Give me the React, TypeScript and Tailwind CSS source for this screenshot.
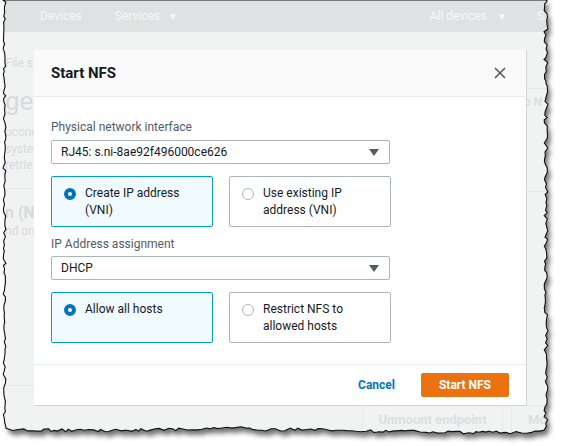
import React from "react";

function rng(seed: number) {
  let a = seed;
  return () => {
    a |= 0;
    a = (a + 0x6d2b79f5) | 0;
    let t = Math.imul(a ^ (a >>> 15), 1 | a);
    t = (t + Math.imul(t ^ (t >>> 7), 61 | t)) ^ t;
    return ((t ^ (t >>> 14)) >>> 0) / 4294967296;
  };
}

function tornPath() {
  const r = rng(7);
  const pts: [number, number][] = [];
  for (let y = 0; y < 428; y += 2 + r() * 3) pts.push([3 + r() * 3, y]);
  for (let x = 6; x < 544; x += 2 + r() * 4) {
    const base = 429 + Math.sin(x / 60) * 1.5 + (x > 250 ? 2 : 0);
    pts.push([x, base + r() * 3 - 1.5]);
  }
  for (let y = 430; y > 0; y -= 2 + r() * 3) pts.push([544 + r() * 4, y]);
  pts.push([546, 0]);
  return "M" + pts.map((p) => `${p[0].toFixed(1)},${p[1].toFixed(1)}`).join(" L") + " Z";
}

function TornEdge() {
  const d = tornPath();
  const outside = `M0,0 H561 V446 H0 Z ${d}`;
  return (
    <svg className="pointer-events-none absolute inset-0" width="561" height="446" viewBox="0 0 561 446">
      <defs>
        <clipPath id="out">
          <path d={outside} clipRule="evenodd" />
        </clipPath>
        <filter id="blur" x="-10%" y="-10%" width="120%" height="120%">
          <feGaussianBlur stdDeviation="2.5" />
        </filter>
      </defs>
      <path d={outside} fill="#fff" fillRule="evenodd" />
      <g clipPath="url(#out)">
        <path d={d} transform="translate(3,5)" fill="rgba(0,0,0,0.55)" filter="url(#blur)" />
      </g>
      <path d={d} fill="none" stroke="#111" strokeWidth="1.1" />
    </svg>
  );
}

function Caret() {
  return (
    <svg width="10" height="7" viewBox="0 0 10 7">
      <path d="M0 0 H10 L5 7 Z" fill="#545b64" />
    </svg>
  );
}

function Select({ value }: { value: string }) {
  return (
    <div className="flex h-[24px] w-[339px] items-center justify-between rounded-[2px] border border-[#aab7b8] bg-white pl-[9px] pr-[10px] text-[12px] text-[#16191f]">
      <span>{value}</span>
      <Caret />
    </div>
  );
}

function Tile({ selected, lines }: { selected?: boolean; lines: string[] }) {
  return (
    <div
      className={
        "flex h-[51px] w-[162px] items-start gap-[9px] rounded-[2px] border pl-[12px] pt-[8px] " +
        (selected ? "border-[#00a1c9] bg-[#f1faff]" : "border-[#aab7b8] bg-white")
      }
    >
      <span
        className={
          "mt-[3px] block h-[12px] w-[12px] shrink-0 rounded-full bg-white " +
          (selected ? "border-[4px] border-[#0073bb]" : "border border-[#aab7b8]")
        }
      />
      <div className="text-[12px] leading-[17px] text-[#16191f]">
        {lines.map((l) => (
          <div key={l}>{l}</div>
        ))}
      </div>
    </div>
  );
}

export default function App() {
  return (
    <div className="relative h-[446px] w-[561px] overflow-hidden bg-[#f1f2f2] font-['Roboto',sans-serif]">
      <header className="flex h-[32px] items-center bg-[#dfe2e2] pl-[40px] text-[12px] text-[#f6f7f7]">
        <span>Devices</span>
        <span className="ml-[33px] flex items-center gap-[8px]">
          Services <span className="text-[10px]">▼</span>
        </span>
        <span className="ml-auto flex items-center gap-[10px]">
          All devices <span className="text-[10px]">▼</span>
        </span>
        <span className="ml-[30px] mr-[17px]">S</span>
      </header>

      <main className="flex justify-between">
        <div className="flex w-[34px] flex-col overflow-hidden whitespace-nowrap pl-[5px] text-[#d8dbdb]">
          <div className="mt-[22px] text-[12px]">File st</div>
          <div className="mt-[14px] text-[26px] leading-[30px]">ge</div>
          <div className="mt-[8px] text-[12px] leading-[16.5px]">
            <div>ucone</div>
            <div>syste</div>
            <div>retrie</div>
          </div>
          <div className="mt-[14px] w-[40px] border-t border-[#e6e8e8]" />
          <div className="mt-[14px] text-[16px] font-bold leading-[20px]">n (N</div>
          <div className="text-[12px] leading-[16px]">nd on</div>
          <div className="mt-[146px] w-[40px] border-t border-[#e6e8e8]" />
        </div>
        <div className="mr-[10px] mt-[56px] flex h-[104px] w-[30px] flex-col overflow-hidden whitespace-nowrap border-y border-l border-[#e6e8e8] pl-[2px] pt-[4px] text-[12px] font-bold text-[#dcdfdf]">
          o N
        </div>
      </main>

      <div className="absolute left-[362px] top-[405px] flex h-[30px] w-[141px] items-center justify-center border border-[#e8eaea] text-[13px] font-bold text-[#dde0e0]">
        Unmount endpoint
      </div>
      <div className="absolute left-[511px] top-[405px] flex h-[30px] w-[50px] items-center border border-[#e8eaea] pl-[16px] text-[13px] font-bold text-[#dde0e0]">
        Mo
      </div>

      <section className="absolute left-[34px] top-[50px] flex w-[493px] flex-col border-b border-r border-[#cfd4d4] bg-white">
        <div className="flex h-[47px] items-center justify-between border-b border-[#eaeded] bg-[#fafafa] pl-[17px] pr-[20px]">
          <h2 className="text-[15px] font-bold text-[#16191f]">Start NFS</h2>
          <svg width="12" height="12" viewBox="0 0 12 12">
            <path d="M1 1 L11 11 M11 1 L1 11" stroke="#545b64" strokeWidth="1.6" />
          </svg>
        </div>
        <div className="flex flex-col pl-[17px] pt-[20px] pb-[21px]">
          <label className="text-[12px] leading-[20px] text-[#545b64]">Physical network interface</label>
          <div className="mt-[3px]">
            <Select value="RJ45: s.ni-8ae92f496000ce626" />
          </div>
          <div className="mt-[12px] flex gap-[16px]">
            <Tile selected lines={["Create IP address", "(VNI)"]} />
            <Tile lines={["Use existing IP", "address (VNI)"]} />
          </div>
          <label className="mt-[7px] text-[12px] leading-[20px] text-[#545b64]">IP Address assignment</label>
          <div className="mt-[2px]">
            <Select value="DHCP" />
          </div>
          <div className="mt-[12px] flex gap-[16px]">
            <Tile selected lines={["Allow all hosts"]} />
            <Tile lines={["Restrict NFS to", "allowed hosts"]} />
          </div>
        </div>
        <div className="flex h-[41px] items-center justify-end gap-[26px] border-t border-[#eaeded] pr-[17px]">
          <button className="text-[12px] font-bold text-[#0073bb]">Cancel</button>
          <button className="h-[24px] w-[88px] rounded-[2px] bg-[#ec7211] text-[12px] font-bold text-white">Start NFS</button>
        </div>
      </section>

      <TornEdge />
    </div>
  );
}
